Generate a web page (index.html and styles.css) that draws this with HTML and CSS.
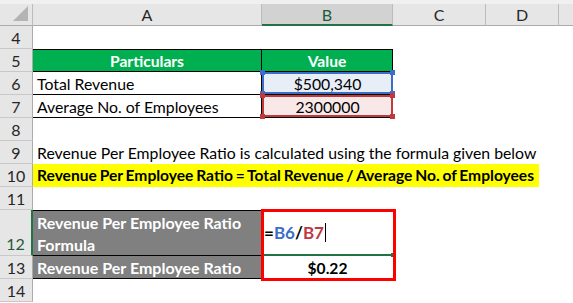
FILE: index.html
```html
<!DOCTYPE html>
<html lang="en">
<head>
    <meta charset="UTF-8">
    <title>Revenue Per Employee Ratio</title>
    <link rel="stylesheet" href="styles.css">
</head>
<body>

    <div class="sheet">
        <div class="strip"></div>

        <!-- column headers -->
        <div class="corner">
            <svg width="16" height="16" viewBox="0 0 16 16"><polygon points="15,0 15,15 0,15" fill="#b4b4b4"/></svg>
        </div>
        <div class="col-head">A</div>
        <div class="col-head selected">B</div>
        <div class="col-head">C</div>
        <div class="col-head">D</div>
        <div class="col-head last"></div>

        <div class="row-num">4</div>

        <div class="row-num">5</div>
        <div class="cell col-a tbl green top">Particulars</div>
        <div class="cell col-b tbl green top">Value</div>

        <div class="row-num">6</div>
        <div class="cell col-a tbl left-text">Total Revenue</div>
        <div class="cell col-b ref ref-blue">
            $500,340
            <span class="handle tl"></span><span class="handle tr"></span>
            <span class="handle bl"></span><span class="handle br"></span>
        </div>

        <div class="row-num">7</div>
        <div class="cell col-a tbl left-text">Average No. of Employees</div>
        <div class="cell col-b ref ref-red">
            2300000
            <span class="handle tl"></span><span class="handle tr"></span>
            <span class="handle bl"></span><span class="handle br"></span>
        </div>

        <div class="row-num">8</div>

        <div class="row-num">9</div>
        <div class="cell wide left-text">Revenue Per Employee Ratio is calculated using the formula given below</div>

        <div class="row-num">10</div>
        <div class="cell wide"><span class="highlight">Revenue Per Employee Ratio = Total Revenue / Average No. of Employees</span></div>

        <div class="row-num">11</div>

        <div class="row-num active">12</div>
        <div class="cell col-a gray top wrap">Revenue Per Employee Ratio<br>Formula</div>
        <div class="cell col-b editing">
            <span class="op">=</span><span class="ref1">B6</span><span class="op">/</span><span class="ref2">B7</span><span class="caret"></span>
            <span class="fill-handle"></span>
        </div>

        <div class="row-num">13</div>
        <div class="cell col-a gray">Revenue Per Employee Ratio</div>
        <div class="cell col-b result">$0.22</div>

        <div class="row-num">14</div>

        <div class="red-box"></div>
    </div>

</body>
</html>
```

FILE: styles.css
```css
body {
    margin: 0;
    background-color: #ffffff;
    font-family: Lato, "Liberation Sans", sans-serif;
}

.sheet {
    position: relative;
    display: grid;
    grid-template-columns: 33px 229px 131px 93px 73px 14px;
    grid-template-rows: 4px 22px repeat(8, 23px) 46px 23px 23px;
    width: 573px;
    font-size: 15.8px;
    color: #000;
}

.strip {
    grid-column: 1 / -1;
    background-color: #f0f0f0;
}

/* headers */
.corner {
    grid-column: 1;
    background-color: #e6e6e6;
    border-right: 1px solid #bcbcbc;
    border-bottom: 1px solid #ababab;
    box-sizing: border-box;
    display: flex;
    justify-content: flex-end;
    align-items: flex-end;
    padding: 0 3px 3px 0;
}

.col-head {
    background-color: #e6e6e6;
    border-right: 1px solid #bcbcbc;
    border-bottom: 1px solid #ababab;
    box-sizing: border-box;
    display: flex;
    justify-content: center;
    align-items: center;
    font-size: 16px;
    color: #262626;
}

.col-head.selected {
    background-color: #d2d2d2;
    border-bottom: 2px solid #217346;
    color: #1d5b3a;
}

.col-head.last {
    border-right: none;
}

.row-num {
    grid-column: 1;
    background-color: #e6e6e6;
    border-right: 1px solid #ababab;
    border-bottom: 1px solid #c8c8c8;
    box-sizing: border-box;
    display: flex;
    justify-content: center;
    align-items: center;
    font-size: 16px;
    color: #262626;
}

.row-num.active {
    align-items: flex-end;
    padding-bottom: 2px;
    border-right: 2px solid #217346;
    color: #1d5b3a;
}

/* cells */
.cell {
    box-sizing: border-box;
    display: flex;
    align-items: center;
    white-space: nowrap;
}

.col-a {
    grid-column: 2;
}

.col-b {
    grid-column: 3;
    justify-content: center;
}

.wide {
    grid-column: 2 / -1;
}

.left-text {
    padding-left: 4px;
}

.tbl {
    border-right: 1px solid #000;
    border-bottom: 1px solid #000;
}

.top {
    border-top: 1px solid #000;
}

.green {
    background-color: #00b050;
    color: #ffffff;
    font-weight: bold;
    font-size: 15.6px;
    justify-content: center;
}

.ref {
    position: relative;
    border-bottom: 1px solid #000;
}

.ref-blue {
    background-color: #e8eef8;
    box-shadow: inset 0 0 0 2px #3c6ec8;
}

.ref-red {
    background-color: #f8e8e8;
    box-shadow: inset 0 0 0 2px #c0393f;
}

.handle {
    position: absolute;
    width: 5px;
    height: 5px;
}

.ref-blue .handle {
    background-color: #3c6ec8;
}

.ref-red .handle {
    background-color: #c0393f;
}

.handle.tl { left: -2px; top: -2px; }
.handle.tr { right: -2px; top: -2px; }
.handle.bl { left: -2px; bottom: -2px; }
.handle.br { right: -2px; bottom: -2px; }

.highlight {
    background-color: #ffff00;
    font-weight: bold;
    font-size: 15.6px;
    word-spacing: -1px;
    line-height: 23px;
    padding: 0 5px 0 4px;
}

.gray {
    background-color: #808080;
    color: #ffffff;
    font-weight: bold;
    font-size: 16px;
    border-right: 1px solid #000;
    border-bottom: 1px solid #000;
    padding-left: 4px;
}

.wrap {
    align-items: flex-start;
    line-height: 22px;
    padding-top: 1px;
}

.editing {
    position: relative;
    justify-content: flex-start;
    padding-left: 2px;
    font-weight: bold;
    font-size: 17px;
    border-bottom: 2px solid #217346;
}

.op {
    color: #000;
}

.ref1 {
    color: #3c6ec8;
}

.ref2 {
    color: #c0393f;
}

.caret {
    display: inline-block;
    width: 1px;
    height: 19px;
    margin-left: 1px;
    background-color: #000;
}

.fill-handle {
    position: absolute;
    right: -2px;
    bottom: -3px;
    width: 4px;
    height: 4px;
    background-color: #217346;
}

.result {
    font-weight: bold;
    font-size: 15.6px;
}

.red-box {
    position: absolute;
    grid-column: 3 / 4;
    grid-row: 11 / 13;
    top: -1px;
    left: -1px;
    right: -3px;
    bottom: -2px;
    border: 3px solid #ff0000;
}
```
